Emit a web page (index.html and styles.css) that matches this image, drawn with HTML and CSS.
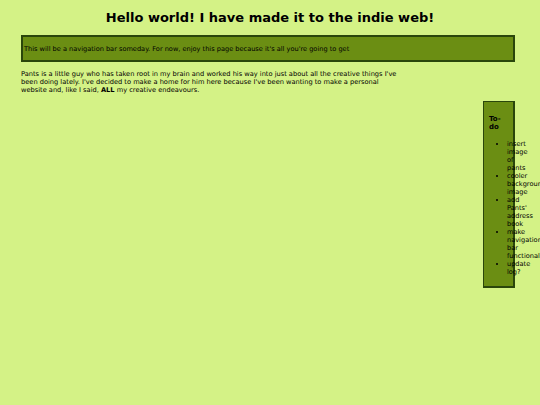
FILE: index.html
```html
<!DOCTYPE html>
<html lang="en">
<head>
<meta charset="utf-8">
<title>Hello world!</title>
<link rel="stylesheet" href="styles.css">
</head>
<body>
<h1 class="title">Hello world! I have made it to the indie web!</h1>
<nav class="navbar">This will be a navigation bar someday. For now, enjoy this page because it's all you're going to get</nav>
<div class="layout">
  <main class="content">
    <p>Pants is a little guy who has taken root in my brain and worked his way into just about all the creative things I've been doing lately. I've decided to make a home for him here because I've been wanting to make a personal website and, like I said, <strong>ALL</strong> my creative endeavours.</p>
  </main>
  <aside class="sidebar">
    <h4 class="sidebar-title">To-do</h4>
    <ul class="todo">
      <li>insert image of pants</li>
      <li>cooler background image</li>
      <li>add Pants' address book</li>
      <li>make navigation bar functional</li>
      <li>update log?</li>
    </ul>
  </aside>
</div>
</body>
</html>
```
FILE: styles.css
```css
html, body {
  margin: 0;
  padding: 0;
}
body {
  background: #d4f286;
  color: #000;
  font-family: "DejaVu Sans", Verdana, sans-serif;
  font-size: 6.6px;
  line-height: 8px;
  padding: 10px 25px 0 21px;
}
.title {
  font-size: 13px;
  line-height: 15px;
  text-align: center;
  margin: 0 -25px 0 -21px;
}
.navbar {
  margin-top: 10px;
  height: 23px;
  background: #6b8e13;
  border: 2px solid #2a460b;
  padding: 0 1px;
  display: flex;
  align-items: center;
}
.layout {
  display: flex;
  justify-content: space-between;
  align-items: flex-start;
}
.content {
  width: 382px;
}
.content p {
  margin: 8px 0 0;
  font-size: 6.65px;
}
.sidebar {
  margin-top: 39px;
  width: 20px;
  height: 184px;
  background: #6b8e13;
  border: 1px solid #2a460b;
  border-right-width: 2px;
  border-bottom-width: 2px;
  padding: 0 4px 0 5px;
  box-sizing: content-box;
}
.sidebar-title {
  font-size: 7px;
  line-height: 8px;
  margin: 13px 0 0;
}
.todo {
  margin: 9px 0 0;
  padding-left: 18px;
}
```
